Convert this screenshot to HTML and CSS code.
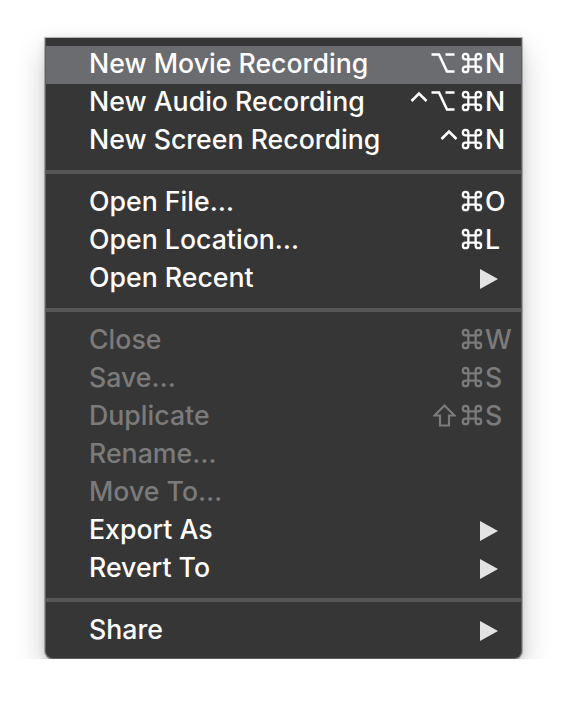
FILE: index.html
```html
<!DOCTYPE html>
<html>
<head>
<meta charset="utf-8">
<link rel="stylesheet" href="styles.css">
</head>
<body>
<div class="menu">
  <div class="item active"><span class="label">New Movie Recording</span><span class="mods"><svg class="opt" width="24" height="20" viewBox="0 0 24 20"><path d="M0.5 1.5H8L16 18.5H23.5M14.5 1.5H23.5"/></svg><svg class="cmd" width="22" height="22" viewBox="0 0 24 24"><path d="M8 8V5A3 3 0 1 0 5 8H19A3 3 0 1 0 16 5V19A3 3 0 1 0 19 16H5A3 3 0 1 0 8 19Z"/></svg></span><span class="key">N</span></div>
  <div class="item"><span class="label">New Audio Recording</span><span class="mods"><svg class="ctl" width="18" height="20" viewBox="0 0 18 20"><path d="M1.5 10L9 2.5L16.5 10"/></svg><svg class="opt" width="24" height="20" viewBox="0 0 24 20"><path d="M0.5 1.5H8L16 18.5H23.5M14.5 1.5H23.5"/></svg><svg class="cmd" width="22" height="22" viewBox="0 0 24 24"><path d="M8 8V5A3 3 0 1 0 5 8H19A3 3 0 1 0 16 5V19A3 3 0 1 0 19 16H5A3 3 0 1 0 8 19Z"/></svg></span><span class="key">N</span></div>
  <div class="item"><span class="label">New Screen Recording</span><span class="mods"><svg class="ctl" width="18" height="20" viewBox="0 0 18 20"><path d="M1.5 10L9 2.5L16.5 10"/></svg><svg class="cmd" width="22" height="22" viewBox="0 0 24 24"><path d="M8 8V5A3 3 0 1 0 5 8H19A3 3 0 1 0 16 5V19A3 3 0 1 0 19 16H5A3 3 0 1 0 8 19Z"/></svg></span><span class="key">N</span></div>
  <div class="sep"></div>
  <div class="item"><span class="label">Open File…</span><span class="mods"><svg class="cmd" width="22" height="22" viewBox="0 0 24 24"><path d="M8 8V5A3 3 0 1 0 5 8H19A3 3 0 1 0 16 5V19A3 3 0 1 0 19 16H5A3 3 0 1 0 8 19Z"/></svg></span><span class="key">O</span></div>
  <div class="item"><span class="label">Open Location…</span><span class="mods"><svg class="cmd" width="22" height="22" viewBox="0 0 24 24"><path d="M8 8V5A3 3 0 1 0 5 8H19A3 3 0 1 0 16 5V19A3 3 0 1 0 19 16H5A3 3 0 1 0 8 19Z"/></svg></span><span class="key">L</span></div>
  <div class="item"><span class="label">Open Recent</span><span class="arrow"><svg width="18" height="20" viewBox="0 0 18 20"><polygon points="0,0 18,10 0,20"/></svg></span></div>
  <div class="sep"></div>
  <div class="item disabled"><span class="label">Close</span><span class="mods"><svg class="cmd" width="22" height="22" viewBox="0 0 24 24"><path d="M8 8V5A3 3 0 1 0 5 8H19A3 3 0 1 0 16 5V19A3 3 0 1 0 19 16H5A3 3 0 1 0 8 19Z"/></svg></span><span class="key">W</span></div>
  <div class="item disabled"><span class="label">Save…</span><span class="mods"><svg class="cmd" width="22" height="22" viewBox="0 0 24 24"><path d="M8 8V5A3 3 0 1 0 5 8H19A3 3 0 1 0 16 5V19A3 3 0 1 0 19 16H5A3 3 0 1 0 8 19Z"/></svg></span><span class="key">S</span></div>
  <div class="item disabled"><span class="label">Duplicate</span><span class="mods"><svg class="shift" width="23" height="23" viewBox="0 0 23 23"><path d="M11.5 1.5L21.5 11.5H16V21.5H7V11.5H1.5Z"/></svg><svg class="cmd" width="22" height="22" viewBox="0 0 24 24"><path d="M8 8V5A3 3 0 1 0 5 8H19A3 3 0 1 0 16 5V19A3 3 0 1 0 19 16H5A3 3 0 1 0 8 19Z"/></svg></span><span class="key">S</span></div>
  <div class="item disabled"><span class="label">Rename…</span></div>
  <div class="item disabled"><span class="label">Move To…</span></div>
  <div class="item"><span class="label">Export As</span><span class="arrow"><svg width="18" height="20" viewBox="0 0 18 20"><polygon points="0,0 18,10 0,20"/></svg></span></div>
  <div class="item"><span class="label">Revert To</span><span class="arrow"><svg width="18" height="20" viewBox="0 0 18 20"><polygon points="0,0 18,10 0,20"/></svg></span></div>
  <div class="sep"></div>
  <div class="item"><span class="label">Share</span><span class="arrow"><svg width="18" height="20" viewBox="0 0 18 20"><polygon points="0,0 18,10 0,20"/></svg></span></div>
</div>
</body>
</html>
```

FILE: styles.css
```css
html, body {
  margin: 0;
  padding: 0;
  background: #ffffff;
}
body {
  padding: 38px 0 0 45px;
  font-family: Inter, "Liberation Sans", sans-serif;
}
.menu {
  width: 475px;
  background: #363636;
  border: 1px solid #606060;
  border-top: none;
  border-radius: 0 0 8px 8px;
  padding: 8px 0;
  box-shadow: 0 0 0 1px rgba(0,0,0,0.25), 0 14px 30px rgba(0,0,0,0.22), 0 2px 8px rgba(0,0,0,0.12);
}
.item {
  display: grid;
  grid-template-columns: 1fr auto 30px;
  align-items: center;
  height: 38px;
  padding: 0 6px 0 43px;
  color: #ffffff;
  font-size: 26.7px;
  font-weight: 500;
  line-height: 38px;
}
.item.active {
  background: #6b6c70;
}
.item.disabled {
  color: #7b7b7b;
}
.label {
  white-space: nowrap;
  transform: translateY(-2px);
}
.mods {
  display: flex;
  align-items: center;
  justify-content: flex-end;
  padding-right: 2px;
  transform: translateY(-2px);
}
.mods svg {
  display: block;
  fill: none;
  stroke: currentColor;
  stroke-width: 2.6;
  stroke-linecap: butt;
  stroke-linejoin: miter;
}
.mods .cmd {
  stroke-width: 2.5;
}
.mods .ctl {
  margin-right: 3px;
  stroke-width: 2.6;
}
.mods .opt {
  margin-right: 6px;
}
.mods .shift {
  margin-right: 5px;
  stroke-width: 2.2;
  stroke-linejoin: miter;
}
.key {
  transform: translateY(-2px);
}
.arrow {
  grid-column: 3;
  display: flex;
  align-items: center;
  margin-left: -5px;
}
.arrow svg {
  display: block;
  fill: #e3e3e3;
}
.sep {
  height: 4px;
  background: #575757;
  margin: 10px 0;
}
```
